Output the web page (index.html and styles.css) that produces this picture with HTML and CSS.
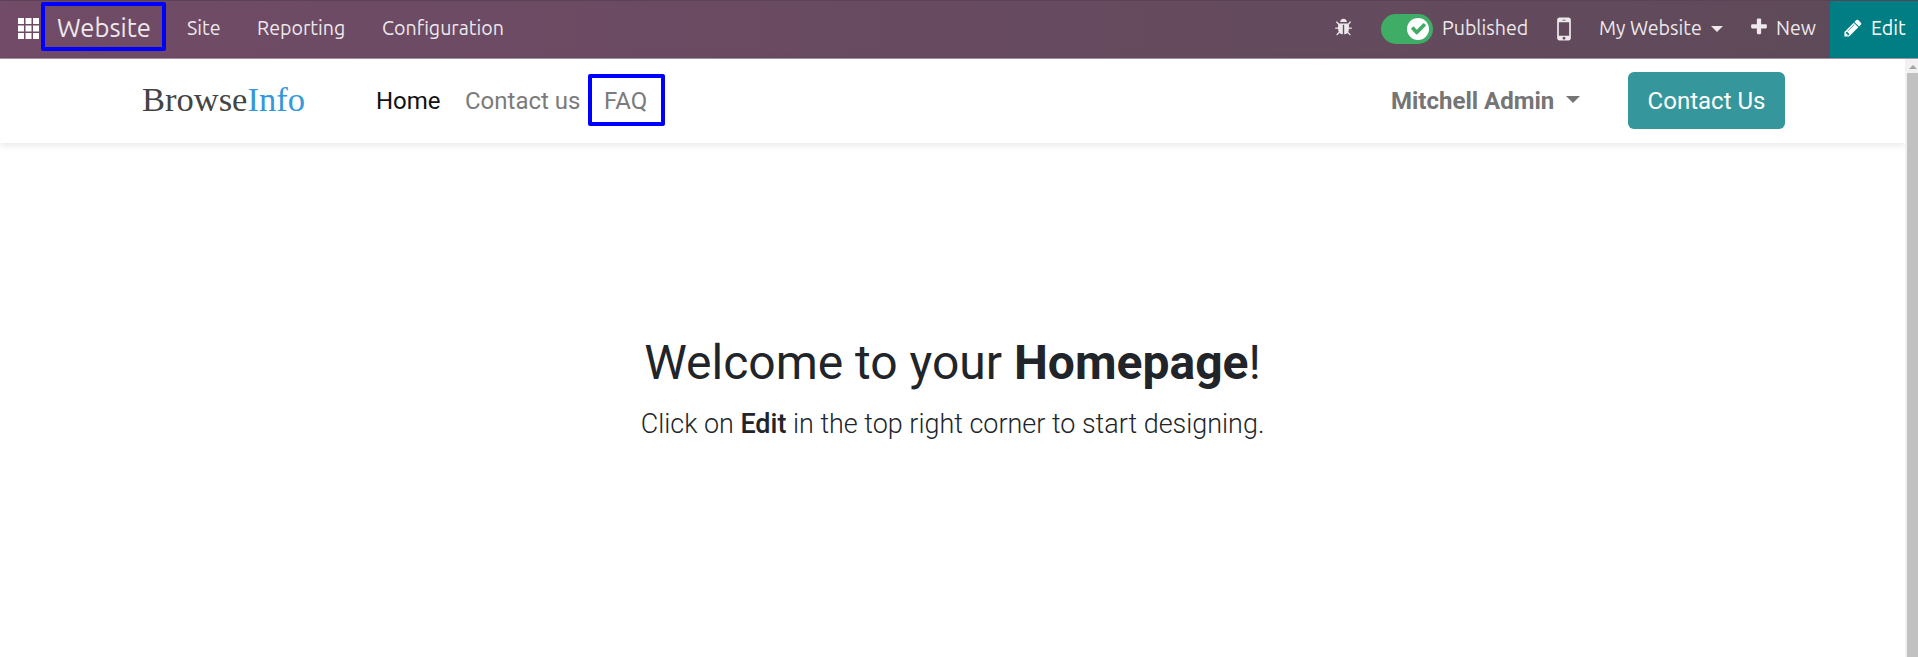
FILE: index.html
```html
<!DOCTYPE html>
<html lang="en">
<head>
<meta charset="utf-8">
<title>Home | My Website</title>
<link rel="stylesheet" href="styles.css">
</head>
<body>
<nav class="topbar">
  <svg class="apps" viewBox="0 0 21 21"><path d="M0 0h6v6H0zM7.500 0h6v6h-6zM15 0h6v6h-6zM0 7.500h6v6H0zM7.500 7.500h6v6h-6zM15 7.500h6v6h-6zM0 15h6v6H0zM7.500 15h6v6h-6zM15 15h6v6h-6z"/></svg>
  <a class="brand"><span>Website</span></a>
  <a class="item site">Site</a>
  <a class="item reporting">Reporting</a>
  <a class="item configuration">Configuration</a>
  <div class="tools">
    <svg class="bug" viewBox="0 0 1792 1792"><path d="M1696 960q0 26-19 45t-45 19h-224q0 171-67 290l208 209q19 19 19 45t-19 45q-18 19-45 19t-45-19l-198-197q-5 5-15 13t-42 28.500-65 36.500-82 29-97 13v-896h-128v896q-51 0-101.500-13.500t-87-33-66-39-43.500-32.500l-15-14-183 207q-20 21-48 21-24 0-43-16-19-18-20.500-44.500t15.500-46.500l202-227q-58-114-58-274h-224q-26 0-45-19t-19-45 19-45 45-19h224v-294l-173-173q-19-19-19-45t19-45 45-19 45 19l173 173h844l173-173q19-19 45-19t45 19 19 45-19 45l-173 173v294h224q26 0 45 19t19 45zm-480-576h-640q0-133 93.500-226.500t226.500-93.500 226.500 93.500 93.500 226.500z"/></svg>
    <div class="toggle"><div class="knob"><svg viewBox="0 0 1792 1792"><path d="M1671 566q0 40-28 68l-724 724-136 136q-28 28-68 28t-68-28l-136-136-362-362q-28-28-28-68t28-68l136-136q28-28 68-28t68 28l294 295 656-657q28-28 68-28t68 28l136 136q28 28 28 68z"/></svg></div></div>
    <a class="item published">Published</a>
    <svg class="mobile" viewBox="0 0 1792 1792"><path d="M976 1408q0-33-23.500-56.500t-56.500-23.500-56.500 23.500-23.500 56.500 23.500 56.500 56.500 23.500 56.500-23.500 23.500-56.500zm208-160v-704q0-13-9.500-22.500t-22.500-9.500h-512q-13 0-22.500 9.500t-9.500 22.500v704q0 13 9.500 22.500t22.500 9.500h512q13 0 22.500-9.500t9.500-22.500zm-192-848q0-16-16-16h-160q-16 0-16 16t16 16h160q16 0 16-16zm288-16v1024q0 52-38 90t-90 38h-512q-52 0-90-38t-38-90v-1024q0-52 38-90t90-38h512q52 0 90 38t38 90z"/></svg>
    <a class="item mysite">My Website</a>
    <i class="caret light"></i>
    <svg class="plus" viewBox="0 0 1792 1792"><path d="M1600 736v192q0 40-28 68t-68 28h-416v416q0 40-28 68t-68 28h-192q-40 0-68-28t-28-68v-416h-416q-40 0-68-28t-28-68v-192q0-40 28-68t68-28h416v-416q0-40 28-68t68-28h192q40 0 68 28t28 68v416h416q40 0 68 28t28 68z"/></svg>
    <a class="item new">New</a>
    <a class="edit">
      <svg class="pencil" viewBox="0 0 1792 1792"><path d="M491 1536l91-91-235-235-91 91v107h128v128h107zm523-928q0-22-22-22-10 0-17 7l-542 542q-7 7-7 17 0 22 22 22 10 0 17-7l542-542q7-7 7-17zm-54-192l416 416-832 832h-416v-416zm683 96q0 53-37 90l-166 166-416-416 166-165q36-38 90-38 53 0 91 38l235 234q37 39 37 91z"/></svg>
      <span class="item">Edit</span>
    </a>
  </div>
</nav>
<div class="frame">
  <div class="page">
    <header class="header">
      <a class="logo">Browse<span>Info</span></a>
      <a class="link home">Home</a>
      <a class="link contact">Contact us</a>
      <a class="link faq">FAQ</a>
      <div class="account">
        <a class="user">Mitchell Admin</a>
        <i class="caret"></i>
        <a class="cta">Contact Us</a>
      </div>
    </header>
    <main class="hero">
      <h1>Welcome to your <b>Homepage</b>!</h1>
      <p>Click on <b>Edit</b> in the top right corner to start designing.</p>
    </main>
  </div>
  <div class="scrollbar"><i class="up"></i><div class="thumb"></div></div>
</div>
</body>
</html>
```
FILE: styles.css
```css
* { box-sizing: border-box; }
body {
  margin: 0;
  height: 657px;
  overflow: hidden;
  background: #fff;
  font-family: Roboto, sans-serif;
  display: flex;
  flex-direction: column;
}
svg { display: block; flex: none; }
a { white-space: nowrap; }

.topbar {
  height: 59px;
  flex: none;
  display: flex;
  align-items: flex-start;
  padding-left: 18px;
  background: linear-gradient(90deg, #714b67, #5e4a59);
  border-top: 1px solid #5b4257;
  border-bottom: 1px solid #a595a2;
  color: #ece8eb;
  fill: #ece8eb;
  font-family: Ubuntu, "Noto Sans", sans-serif;
}
.apps { width: 21px; height: 21px; margin-top: 17px; fill: #fff; }
.brand {
  width: 125px;
  height: 49px;
  margin: 1px 0 0 2px;
  border: 4px solid #00f;
  border-radius: 2px;
  padding-left: 12px;
  font-size: 25.600px;
  line-height: 43px;
}
.item {
  flex: none;
  font-size: 19.600px;
  line-height: 55px;
}
.site { margin-left: 21px; width: 70px; }
.reporting { width: 125px; }
.configuration { width: 200px; }
.tools { margin-left: auto; display: flex; }
.bug { width: 19px; height: 19px; margin: 17px 28px 0 0; }
.toggle {
  width: 52px;
  height: 30px;
  margin: 12.500px 9px 0 0;
  padding: 4px;
  border-radius: 15px;
  background: #40ad67;
  display: flex;
  justify-content: flex-end;
}
.knob {
  width: 22px;
  height: 22px;
  border-radius: 50%;
  background: #fff;
  display: flex;
  align-items: center;
  justify-content: center;
}
.knob svg { width: 17px; height: 17px; fill: #40ad67; }
.published { width: 106px; }
.mobile { width: 32px; height: 32px; margin-top: 12px; }
.mysite { width: 113px; margin-left: 19px; }
.caret {
  width: 0;
  height: 0;
  flex: none;
  border: 7px solid transparent;
  border-top-color: #757575;
  border-bottom: 0;
}
.caret.light {
  border-width: 6px 6px 0;
  border-top-color: #ece8eb;
  margin: 25px 25px 0 -1px;
}
.plus { width: 20px; height: 20px; margin: 16px 0 0 1px; }
.new { width: 54px; margin-left: 7px; }
.edit {
  width: 88px;
  height: 57px;
  padding-left: 13px;
  display: flex;
  gap: 8px;
  background: #017e84;
  color: #fff;
  fill: #fff;
}
.pencil { width: 20px; height: 20px; margin-top: 17px; }

.frame { flex: 1; display: flex; min-height: 0; }
.page { flex: 1; display: flex; flex-direction: column; }
.header {
  height: 84px;
  padding-left: 142px;
  display: flex;
  align-items: flex-start;
  font-size: 24px;
  line-height: 84px;
  color: #7b7b7b;
  box-shadow: 0 2px 8px rgba(0, 0, 0, 0.1);
}
.logo {
  width: 234px;
  font-family: "Liberation Serif", serif;
  font-size: 34.500px;
  line-height: 80px;
  color: #444;
}
.logo span { color: #3498db; }
.home { width: 89px; color: #111; }
.contact { width: 123px; }
.faq {
  width: 77px;
  height: 52px;
  margin-top: 15px;
  border: 4px solid #00f;
  border-radius: 2px;
  line-height: 46px;
  padding-left: 12px;
}
.account { margin-left: auto; display: flex; padding-right: 120px; }
.user { width: 175px; font-weight: 700; color: #757575; }
.account .caret { margin: 37px 48px 0 0; }
.cta {
  width: 157px;
  height: 57px;
  margin-top: 13px;
  border-radius: 6px;
  background: #35979c;
  color: #fff;
  line-height: 58px;
  text-align: center;
}
.hero { padding-top: 184px; text-align: center; color: #212529; }
.hero h1 { margin: 0 0 8px; font-size: 48px; font-weight: 400; line-height: 72px; }
.hero p { margin: 0; font-size: 26.950px; font-weight: 300; line-height: 35px; }
.hero p b { font-weight: 500; }

.scrollbar {
  width: 13px;
  padding-left: 2px;
  background: #f1f1f1;
  display: flex;
  flex-direction: column;
}
.up {
  width: 0;
  height: 0;
  margin: 6px 0 4px 2px;
  border: 4px solid transparent;
  border-bottom-color: #a3a3a3;
  border-top: 0;
}
.thumb { flex: 1; background: #c1c1c1; }
```
